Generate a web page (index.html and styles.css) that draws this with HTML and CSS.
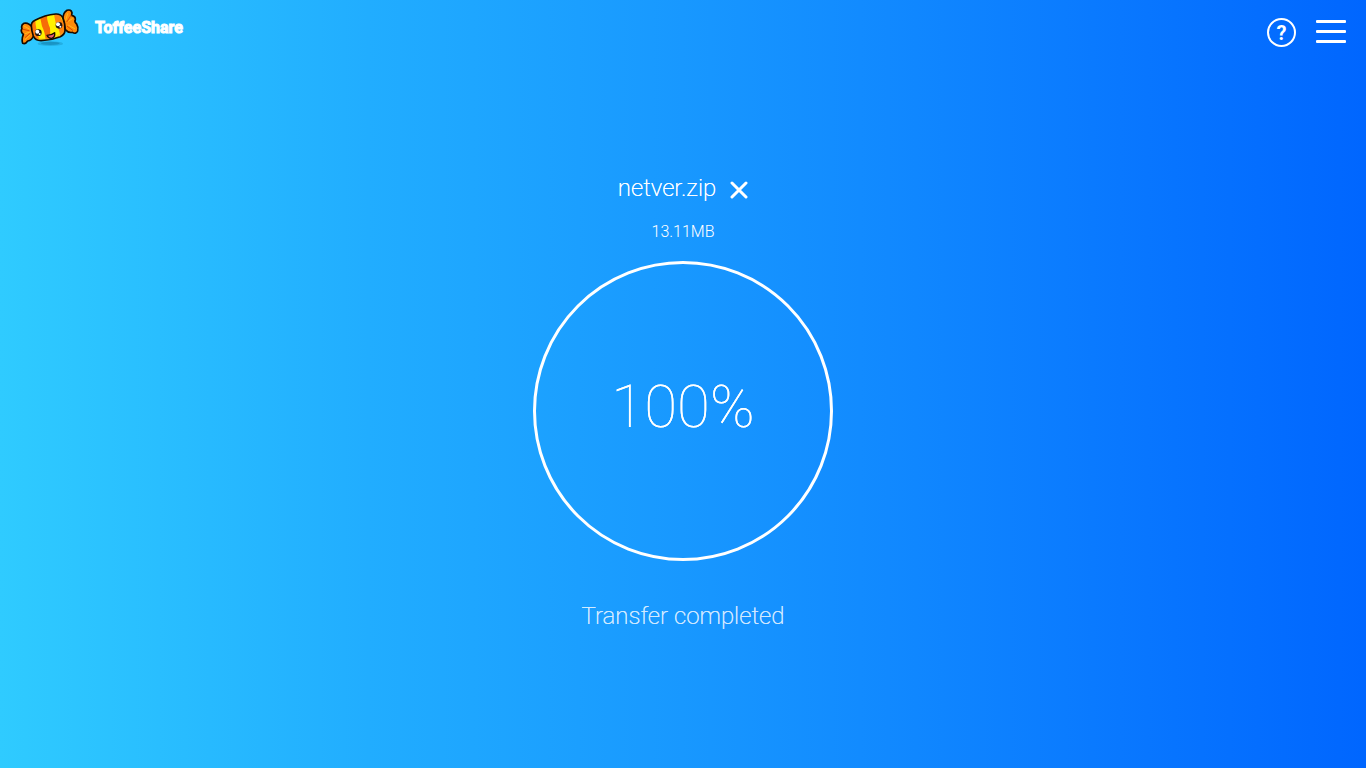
FILE: index.html
```html
<!DOCTYPE html>
<html lang="en">
<head>
    <meta charset="UTF-8">
    <meta name="viewport" content="width=device-width, initial-scale=1.0">
    <title>ToffeeShare</title>
    <link rel="stylesheet" href="styles.css">
</head>
<body>

    <header class="header">
        <a class="brand" href="#">
            <svg class="logo" viewBox="31 24 180 120" aria-hidden="true">
                <defs>
                    <clipPath id="candyBody">
                        <path d="M65 78 Q64 67 76 61 Q105 45 138 42 Q153 41 159 53 Q167 70 166 92 Q165 104 152 110 Q124 121 94 122 Q77 122 71 108 Q66 94 65 78Z"/>
                    </clipPath>
                </defs>
                <!-- Shadow -->
                <ellipse cx="122" cy="131" rx="38" ry="7" fill="#168cba" opacity="0.4"/>
                <ellipse cx="122" cy="130" rx="28" ry="5" fill="#0f7aa6" opacity="0.5"/>
                <!-- Wrapper ends -->
                <g fill="#ff8a0a" stroke="#160b00" stroke-width="5" stroke-linejoin="round">
                    <path d="M69 82 Q55 66 43 70 Q33 75 37 86 Q31 94 41 103 Q35 118 39 130 Q47 134 54 123 Q66 122 73 105Z"/>
                    <path d="M160 58 Q159 39 172 31 Q184 27 187 38 L186 46 Q198 48 197 59 Q193 65 201 72 Q207 82 204 93 Q199 104 188 97 Q177 100 166 88Z"/>
                </g>
                <g fill="none" stroke="#ffb81c" stroke-width="3" stroke-linecap="round">
                    <path d="M43 78 L59 87 M47 101 L61 96 M46 119 L61 105"/>
                    <path d="M174 41 L168 61 M188 56 L174 65 M195 86 L177 76"/>
                </g>
                <g fill="none" stroke="#d94a00" stroke-width="3" stroke-linecap="round">
                    <path d="M40 88 L58 92 M47 112 L60 101"/>
                    <path d="M184 46 L172 65 M189 91 L173 79"/>
                </g>
                <!-- Body with stripes -->
                <g clip-path="url(#candyBody)">
                    <path fill="#fff000" d="M55 35H180V130H55Z"/>
                    <path fill="#ff790b" d="M55 62 L77 55 Q76 85 91 124 L61 126Z"/>
                    <path fill="#f66c08" d="M91 50 L112 44 Q111 61 121 84 L123 123 L108 124 Q107 98 97 79Z"/>
                    <path fill="#ff8510" d="M132 38 L151 39 Q153 62 170 75 L167 109 L151 114 Q153 93 139 74Z"/>
                    <path fill="#ffb51d" d="M72 112 Q115 123 167 94 L165 123 L72 128Z" opacity="0.45"/>
                </g>
                <path d="M65 78 Q64 67 76 61 Q105 45 138 42 Q153 41 159 53 Q167 70 166 92 Q165 104 152 110 Q124 121 94 122 Q77 122 71 108 Q66 94 65 78Z" fill="none" stroke="#160b00" stroke-width="5"/>
                <!-- Face -->
                <circle cx="86" cy="98" r="10" fill="#241610"/>
                <circle cx="148" cy="76" r="10" fill="#241610"/>
                <g fill="#fff">
                    <circle cx="83" cy="95" r="6"/>
                    <circle cx="90" cy="102" r="3"/>
                    <circle cx="145" cy="73" r="6"/>
                    <circle cx="152" cy="80" r="3"/>
                </g>
                <path d="M112 106 Q126 106 135 98 Q137 112 126 115 Q116 116 112 106Z" fill="#ed6174" stroke="#160b00" stroke-width="4" stroke-linejoin="round"/>
            </svg>
            <span class="brand-name">ToffeeShare</span>
        </a>
        <nav class="header-nav">
            <button class="help" type="button" aria-label="Help">?</button>
            <button class="menu" type="button" aria-label="Menu">
                <span class="menu-bar"></span>
                <span class="menu-bar"></span>
                <span class="menu-bar"></span>
            </button>
        </nav>
    </header>

    <main class="transfer">
        <div class="file">
            <span class="file-name">netver.zip</span>
            <button class="file-remove" type="button" aria-label="Remove file">
                <svg viewBox="0 0 18 18" aria-hidden="true">
                    <path d="M2 2 L16 16 M16 2 L2 16"/>
                </svg>
            </button>
        </div>
        <div class="file-size">13.11MB</div>
        <div class="progress">
            <span class="progress-value">100%</span>
        </div>
        <p class="status">Transfer completed</p>
    </main>

</body>
</html>
```

FILE: styles.css
```css
* {
    box-sizing: border-box;
}

body {
    margin: 0;
    min-height: 100vh;
    font-family: Roboto, "Liberation Sans", sans-serif;
    font-weight: 300;
    color: white;
    background: linear-gradient(to right, #2fcbff, #21adff 27%, #1898ff 50%, #0a7aff 80%, #0066ff);
}

button {
    padding: 0;
    border: none;
    background: none;
    color: white;
    font-family: inherit;
    cursor: pointer;
}

/* Header */
.header {
    display: flex;
    justify-content: space-between;
    align-items: flex-start;
    height: 64px;
    padding: 8px 20px 0;
}

.brand {
    display: flex;
    gap: 15px;
    color: white;
    text-decoration: none;
}

.logo {
    width: 60px;
    height: 40px;
}

.brand-name {
    font-size: 16px;
    line-height: 40px;
    font-weight: 700;
    -webkit-text-stroke: 1px white;
}

.header-nav {
    display: flex;
    gap: 20px;
    padding-top: 10px;
}

.help {
    width: 29px;
    height: 29px;
    border: 2px solid white;
    border-radius: 50%;
    font-size: 20px;
    line-height: 26px;
    font-weight: 700;
}

.menu {
    display: flex;
    flex-direction: column;
    gap: 7px;
    width: 30px;
    padding-top: 2px;
}

.menu-bar {
    width: 100%;
    height: 3px;
    border-radius: 1px;
    background-color: white;
}

/* Transfer */
.transfer {
    display: flex;
    flex-direction: column;
    align-items: center;
    padding-top: 108px;
}

.file {
    display: flex;
    align-items: flex-end;
    gap: 14px;
    height: 32px;
}

.file-name {
    font-size: 24px;
    line-height: 32px;
    font-weight: 200;
    text-shadow: 0 0 0 white;
}

.file-remove {
    width: 18px;
    height: 18px;
    margin-bottom: 5px;
}

.file-remove svg {
    display: block;
    fill: none;
    stroke: white;
    stroke-width: 3;
    stroke-linecap: round;
}

.file-size {
    margin-top: 18px;
    font-size: 16px;
    line-height: 20px;
}

.progress {
    display: flex;
    justify-content: center;
    width: 300px;
    height: 300px;
    margin-top: 19px;
    padding-top: 108px;
    border: 3px solid white;
    border-radius: 50%;
}

.progress-value {
    font-size: 60px;
    line-height: 70px;
    font-weight: 100;
    text-shadow: 0 0 0 white;
}

.status {
    margin: 39px 0 0;
    font-size: 24px;
    line-height: 32px;
    font-weight: 200;
    text-shadow: 0 0 0 white;
    opacity: 0.8;
}
```
